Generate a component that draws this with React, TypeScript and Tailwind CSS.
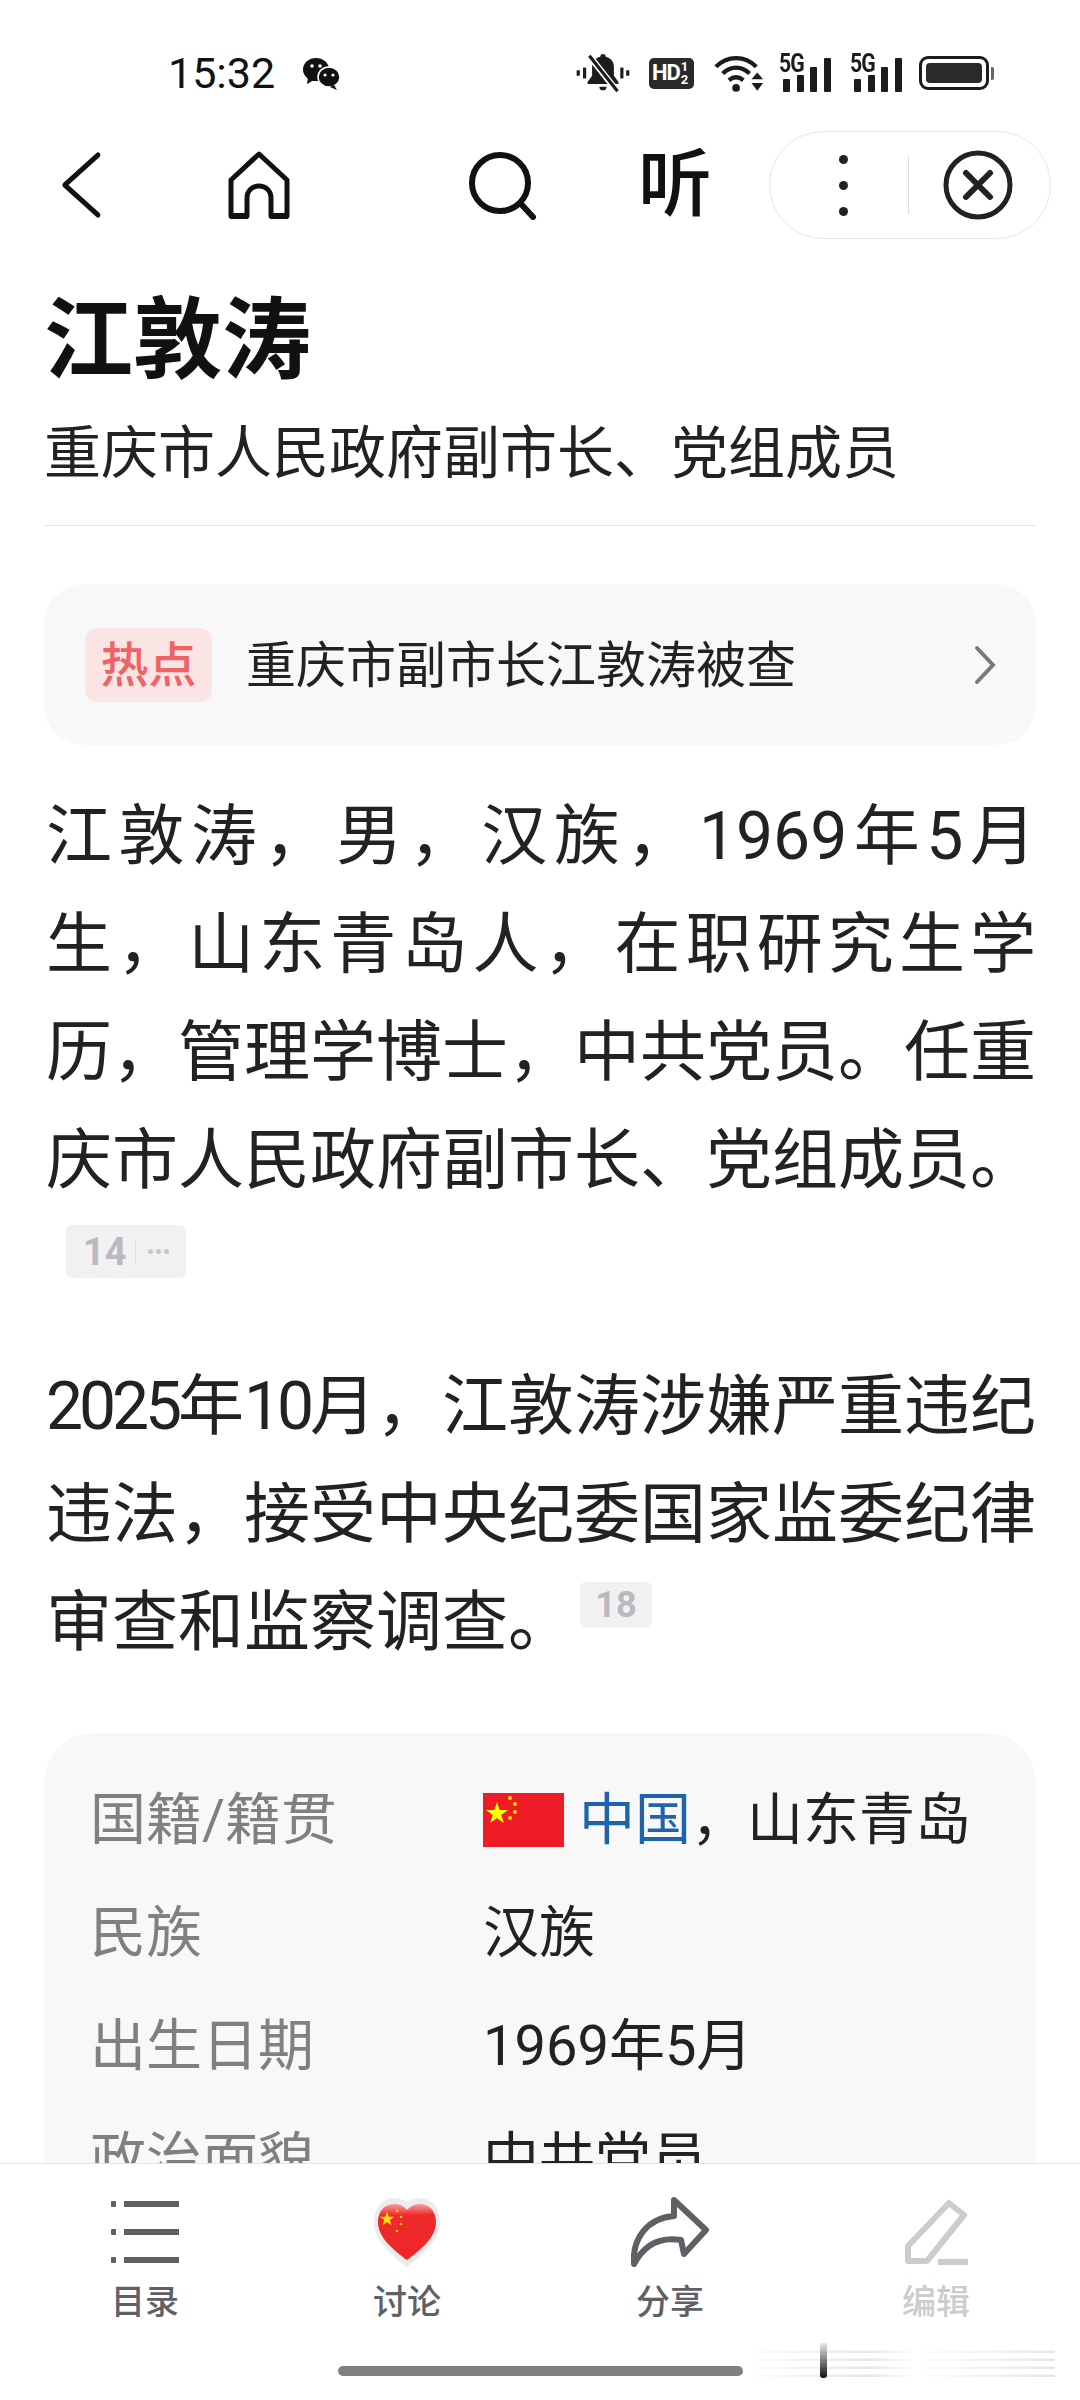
import React from "react";

const cjk = "font-['Roboto','Noto_Sans_CJK_SC',sans-serif]";

function Bell() {
  return (
    <svg width="54" height="40" viewBox="0 0 58 44" fill="#1c1c1c">
      <path d="M29 1c2 0 3 1.500 3 3 5 1 9 5 9 11v10l5 7v2H12v-2l5-7V15c0-6 4-10 9-11 0-1.500 1-3 3-3z" />
      <path d="M25 37h8a4 4 0 0 1-8 0z" />
      <rect x="7" y="16" width="3.500" height="12" />
      <rect x="0" y="19" width="3.500" height="6" />
      <rect x="48" y="16" width="3.500" height="12" />
      <rect x="54.500" y="19" width="3.500" height="6" />
      <path d="M13 2l30 38" stroke="#fff" strokeWidth="7" />
      <path d="M14 3l31 39" stroke="#1c1c1c" strokeWidth="3.500" />
    </svg>
  );
}

function Wifi() {
  return (
    <svg width="50" height="39" viewBox="0 0 52 40" fill="none" stroke="#1c1c1c" strokeWidth="4.500">
      <path d="M2 13C14 1 32 1 44 13" />
      <path d="M9 20c9-8 19-8 28 0" />
      <path d="M15.500 27c5-4 10-4 15 0" />
      <circle cx="23" cy="35" r="4" fill="#1c1c1c" stroke="none" />
      <path d="M45 19l6 7H39z" fill="#1c1c1c" stroke="none" />
      <path d="M45 38l6-8H39z" fill="#1c1c1c" stroke="none" />
    </svg>
  );
}

function Signal() {
  return (
    <div className="relative w-[48px] h-[38px]">
      <span className="absolute left-[-4px] top-[-3px] font-['Roboto',sans-serif] text-[25px] leading-[25px] font-bold text-[#1c1c1c] tracking-[-1px] scale-x-[0.85] origin-left">5G</span>
      <div className="absolute left-0 bottom-0 flex items-end gap-[6.500px]">
        <div className="w-[7px] h-[13px] bg-[#1c1c1c] rounded-[1px]" />
        <div className="w-[7px] h-[17px] bg-[#1c1c1c] rounded-[1px]" />
        <div className="w-[7px] h-[25px] bg-[#1c1c1c] rounded-[1px]" />
        <div className="w-[7px] h-[34px] bg-[#1c1c1c] rounded-[1px]" />
      </div>
    </div>
  );
}

function Wechat() {
  return (
    <svg width="38" height="32" viewBox="0 0 38 32" fill="#111">
      <ellipse cx="13" cy="11.500" rx="13" ry="11.500" />
      <path d="M5 19l-1 7 7-4z" />
      <ellipse cx="26" cy="19" rx="11" ry="10" stroke="#fff" strokeWidth="1.500" />
      <path d="M31 27l3 5-7-3z" />
      <circle cx="9" cy="8" r="1.800" fill="#fff" />
      <circle cx="17" cy="8" r="1.800" fill="#fff" />
      <circle cx="22" cy="17" r="1.600" fill="#fff" />
      <circle cx="30" cy="17" r="1.600" fill="#fff" />
    </svg>
  );
}

function StatusBar() {
  return (
    <div className="h-[131px] pt-[15px] flex items-center relative">
      <span className="ml-[168px] font-['Roboto',sans-serif] text-[43px] leading-none text-[#111]">15:32</span>
      <div className="ml-[28px] mt-[1px]"><Wechat /></div>
      <div className="ml-auto mr-[86px] flex items-center">
        <Bell />
        <div className="ml-[19px] w-[45px] h-[31px] bg-[#2a2a2a] rounded-[5px] flex items-center pl-[3px] text-white font-['Roboto',sans-serif] font-bold text-[22px] leading-none tracking-[-1px]">
          HD
          <span className="ml-[1px] flex flex-col items-center text-[13px] leading-[13px] font-bold">
            <span>1</span>
            <span>2</span>
          </span>
        </div>
        <div className="ml-[20px]"><Wifi /></div>
        <div className="ml-[19px]"><Signal /></div>
        <div className="ml-[23px]"><Signal /></div>
        <div className="ml-[17px] flex items-center">
          <div className="w-[70px] h-[34px] rounded-[9px] border-[3px] border-[#1c1c1c] p-[4px]">
            <div className="w-full h-full rounded-[4px] bg-[#2a2a2a]" />
          </div>
          <div className="w-[3px] h-[13px] ml-[2px] bg-[#666] rounded-r-[2px]" />
        </div>
      </div>
    </div>
  );
}

function NavBar() {
  return (
    <div className="h-[108px] flex items-center relative">
      <svg className="ml-[60px] shrink-0" width="44" height="68" viewBox="0 0 44 68" fill="none" stroke="#111" strokeWidth="5" strokeLinecap="round" strokeLinejoin="round">
        <path d="M40 4L5 34l35 30" transform="matrix(.95 0 0 1 0 0)" />
      </svg>
      <svg className="ml-[122px] shrink-0" width="66" height="68" viewBox="0 0 66 68" fill="none" stroke="#111" strokeWidth="5" strokeLinejoin="round">
        <path d="M33 3L5 29v36h16V47c0-16 24-16 24 0v18h16V29z" />
        <path d="M4 65h18M44 65h18" strokeWidth="6" />
      </svg>
      <svg className="ml-[176px] shrink-0" width="72" height="70" viewBox="0 0 72 70" fill="none" stroke="#111" strokeWidth="6" strokeLinecap="round">
        <circle cx="32" cy="33" r="28" />
        <path d="M54 55l11 12" />
      </svg>
      <span className={`ml-[98px] text-[74px] leading-none font-medium text-[#111] ${cjk}`}>听</span>
      <div className="ml-[57px] w-[282px] h-[108px] shrink-0 rounded-[54px] border border-[#e7e7e7] flex items-center">
        <div className="ml-[69px] flex flex-col gap-[17px]">
          <div className="w-[9px] h-[9px] rounded-full bg-[#222]" />
          <div className="w-[9px] h-[9px] rounded-full bg-[#222]" />
          <div className="w-[9px] h-[9px] rounded-full bg-[#222]" />
        </div>
        <div className="ml-[60px] w-px h-[58px] bg-[#ddd]" />
        <svg className="ml-[33px]" width="72" height="72" viewBox="0 0 72 72" fill="none" stroke="#222" strokeLinecap="round">
          <circle cx="36" cy="36" r="32" strokeWidth="5" />
          <path d="M24 24l24 24M48 24L24 48" strokeWidth="6" />
        </svg>
      </div>
    </div>
  );
}

function Flag() {
  return (
    <svg width="81" height="54" viewBox="0 0 81 54">
      <rect width="81" height="54" fill="#ee1c25" />
      <path d="M14 9l2.600 8h8.400l-6.800 5 2.600 8-6.800-5-6.800 5 2.600-8-6.800-5h8.400z" fill="#ffff00" />
      <circle cx="27" cy="5" r="2" fill="#ffde00" />
      <circle cx="32" cy="11" r="2" fill="#ffde00" />
      <circle cx="32" cy="19" r="2" fill="#ffde00" />
      <circle cx="27" cy="25" r="2" fill="#ffde00" />
    </svg>
  );
}

function InfoRow({ label, children }: { label: string; children: React.ReactNode }) {
  return (
    <div className="h-[113px] flex items-center">
      <div className="w-[393px] text-[#808080]">{label}</div>
      <div className="flex items-center text-[#222]">{children}</div>
    </div>
  );
}

function HeartFlag() {
  return (
    <svg width="70" height="72" viewBox="0 0 70 72">
      <defs>
        <linearGradient id="heart" x1="0" y1="0" x2="0" y2="1">
          <stop offset="0" stopColor="#f6a0a0" />
          <stop offset="0.2" stopColor="#ef2a2a" />
          <stop offset="1" stopColor="#ee2528" />
        </linearGradient>
      </defs>
      <path d="M35 71C18 58 1 44 2 24 3 8 14 1 24 2c5 .5 8 2 11 4 3-2 6-3.500 11-4 10-1 21 6 22 22 1 20-16 34-33 47z" fill="#ececec" />
      <path d="M35 64C20 53 6 41 6 26 6 13 15 7 24 8c5 .5 8 3 11 6 3-3 6-5.500 11-6 9-1 18 5 18 18 0 15-14 27-29 38z" fill="url(#heart)" />
      <path d="M15 17l2.200 6.500h6.800l-5.500 4 2.100 6.500-5.600-4-5.600 4 2.100-6.500-5.500-4h6.800z" fill="#ffe600" transform="translate(3 2) scale(.8)" />
      <circle cx="25" cy="15" r="1.300" fill="#f5c518" />
      <circle cx="29" cy="21" r="1.300" fill="#f5c518" />
      <circle cx="29" cy="28" r="1.300" fill="#f5c518" />
      <circle cx="25" cy="35" r="1.300" fill="#f5c518" />
    </svg>
  );
}

function TabItem({ icon, label, muted, width }: { icon: React.ReactNode; label: string; muted?: boolean; width: string }) {
  return (
    <div className={`${width} shrink-0 flex flex-col items-center`}>
      <div className="h-[72px] flex items-center justify-center">{icon}</div>
      <span className={`mt-[14px] text-[34px] leading-[40px] font-medium ${muted ? "text-[#cccccc]" : "text-[#5f6065]"}`}>{label}</span>
    </div>
  );
}

function BottomBar() {
  return (
    <div className={`h-[237px] shrink-0 bg-white border-t-[1px] border-[#e4e4e4] relative ${cjk}`}>
      <div className="flex pt-[32px] pl-[45px]">
        <TabItem
          width="w-[200px]"
          label="目录"
          icon={
            <svg width="68" height="64" viewBox="0 0 68 64" fill="#5f6065">
              <rect x="0" y="1" width="5" height="6" rx="1" /><rect x="13" y="1" width="55" height="6" />
              <rect x="0" y="29" width="5" height="6" rx="1" /><rect x="13" y="29" width="55" height="6" />
              <rect x="0" y="57" width="5" height="6" rx="1" /><rect x="13" y="57" width="55" height="6" />
            </svg>
          }
        />
        <TabItem width="w-[324px]" label="讨论" icon={<HeartFlag />} />
        <TabItem
          width="w-[202px]"
          label="分享"
          icon={
            <svg width="78" height="70" viewBox="0 0 78 70" fill="none" stroke="#5f6065" strokeWidth="6" strokeLinejoin="round" strokeLinecap="round">
              <path d="M43 3l32 30-22 24-3-14C26 39 12 50 3 67 1 42 16 21 43 19z" />
            </svg>
          }
        />
        <TabItem
          width="w-[330px]"
          muted
          label="编辑"
          icon={
            <svg width="64" height="66" viewBox="0 0 64 66" fill="none" stroke="#cccccc" strokeWidth="6" strokeLinejoin="round">
              <path d="M45 4l15 12L23 62H4V47z" />
              <path d="M34 63h30" />
            </svg>
          }
        />
      </div>
      <div className="absolute left-[338px] top-[202px] w-[405px] h-[10px] rounded-full bg-[#808080]" />
      <div className="absolute left-[745px] top-[181px] w-[310px] h-[33px] bg-[repeating-linear-gradient(180deg,#ffffff_0px,#ffffff_5px,#e6e6e6_6px,#e6e6e6_8px)] [mask-image:linear-gradient(90deg,transparent,#000_40%,transparent_55%,#000_100%)]" />
      <div className="absolute left-[820px] top-[179px] w-[7px] h-[35px] rounded-b-[3px] bg-[linear-gradient(180deg,#e8e8e8,#111111)]" />
    </div>
  );
}

export default function App() {
  return (
    <div className={`w-[1080px] h-[2400px] bg-white overflow-hidden flex flex-col ${cjk}`}>
      <StatusBar />
      <NavBar />
      <div className="flex-1 min-h-0 overflow-hidden px-[44px]">
        <h1 className="mt-[54px] text-[89px] leading-[96px] font-bold text-[#111]">江敦涛</h1>
        <div className="mt-[30px] text-[57px] leading-[70px] text-[#222]">重庆市人民政府副市长、党组成员</div>
        <div className="mt-[36px] border-t border-[#e8e8e8]" />
        <div className="mt-[58px] h-[161px] rounded-[40px] bg-[#f8f8f8] flex items-center pl-[41px] pr-[40px]">
          <div className="w-[127px] h-[74px] rounded-[12px] bg-[#fbe5e4] text-[#ee6464] font-medium text-[48px] leading-none flex items-center justify-center pt-[3px]">热点</div>
          <div className="ml-[34px] pt-[3px] text-[50px] leading-none text-[#222]">重庆市副市长江敦涛被查</div>
          <svg className="ml-auto" width="22" height="40" viewBox="0 0 22 40" fill="none" stroke="#7a7a7a" strokeWidth="4" strokeLinecap="round">
            <path d="M3 3l16 17L3 37" />
          </svg>
        </div>
        <p className="mt-[38px] pl-[2px] text-[66px] leading-[108px] text-[#222] text-justify">
          {"江敦涛\uFF0C男\uFF0C汉族\uFF0C1969年5月生\uFF0C山东青岛人\uFF0C在职研究生学历\uFF0C管理学博士\uFF0C中共党员。任重庆市人民政府副市长、党组成员。"}
          <span className="inline-flex align-top mt-[10px] ml-[20px] w-[120px] h-[53px] rounded-[6px] bg-[#f1f1f2] items-center pl-[17px] text-[38px] leading-none font-bold text-[#b9b9c0]">
            14
            <span className="ml-[8px] w-px h-[26px] bg-[#dcdcdc]" />
            <span className="ml-[12px] flex gap-[3px]">
              <span className="w-[5px] h-[5px] rounded-full bg-[#c8c8cc]" />
              <span className="w-[5px] h-[5px] rounded-full bg-[#c8c8cc]" />
              <span className="w-[5px] h-[5px] rounded-full bg-[#c8c8cc]" />
            </span>
          </span>
        </p>
        <p className="mt-[30px] pl-[2px] text-[66px] leading-[108px] text-[#222] text-justify">
          <span className="tracking-[-4.1px]">2025</span>年<span className="tracking-[-4.1px]">10</span>
          {"月\uFF0C江敦涛涉嫌严重违纪违法\uFF0C接受中央纪委国家监委纪律审查和监察调查。"}
          <span className="inline-flex align-top mt-[13px] ml-[6px] w-[72px] h-[46px] rounded-[6px] bg-[#f1f1f2] items-center justify-center text-[36px] leading-none font-bold text-[#b9b9c0]">18</span>
        </p>
        <div className="mt-[56px] rounded-t-[50px] bg-[#f8f8f9] pt-[30px] pl-[46px] text-[56px] leading-none">
          <InfoRow label="国籍/籍贯">
            <Flag />
            <span className="ml-[15px] text-[#1f63ad]">中国</span>
            <span>{"\uFF0C山东青岛"}</span>
          </InfoRow>
          <InfoRow label="民族">汉族</InfoRow>
          <InfoRow label="出生日期">1969年5月</InfoRow>
          <InfoRow label="政治面貌">中共党员</InfoRow>
        </div>
      </div>
      <BottomBar />
    </div>
  );
}
